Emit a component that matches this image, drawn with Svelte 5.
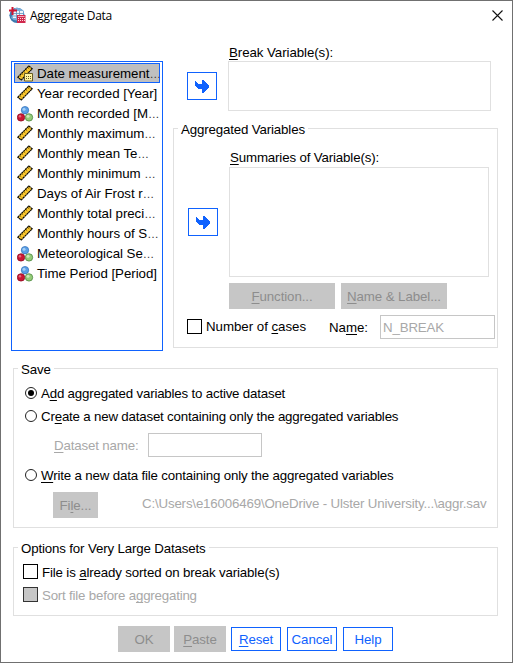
<script>
  const variables = [
    { name: 'Date measurement', dots: true, type: 'date' },
    { name: 'Year recorded [Year]', type: 'scale' },
    { name: 'Month recorded [M', dots: true, type: 'nominal' },
    { name: 'Monthly maximum', dots: true, type: 'scale' },
    { name: 'Monthly mean Te', dots: true, type: 'scale' },
    { name: 'Monthly minimum ', dots: true, type: 'scale' },
    { name: 'Days of Air Frost r', dots: true, type: 'scale' },
    { name: 'Monthly total preci', dots: true, type: 'scale' },
    { name: 'Monthly hours of S', dots: true, type: 'scale' },
    { name: 'Meteorological Se', dots: true, type: 'nominal' },
    { name: 'Time Period [Period]', type: 'nominal' }
  ];
  let selected = $state(0);
  let mode = $state('add');
</script>

{#snippet arrow()}
  <svg width="14" height="13" viewBox="0 0 14 13" shape-rendering="crispEdges">
    <path d="M0 1 H1 L3 4 H7 V0 H8 L14 6 V7 L8 13 H7 V9 H4 L1 7 L0 5Z" fill="#0f62fe" />
  </svg>
{/snippet}

{#snippet ruler()}
  <path d="M.8 12.2 L11.8 1 L15.2 3.8 L4.2 15Z" fill="#ffcb2e" stroke="#0c0a00" stroke-width="1.2" stroke-dasharray="2.200 .4" />
  <path d="M3 10.700l1.300 1.200M5 8.700l1.300 1.200M7 6.700l1.300 1.200M9 4.700l1.300 1.200M11 2.800l1.300 1.100" stroke="#4e3d0b" stroke-width=".7" />
{/snippet}

<div class="window">
  <header>
    <svg width="17" height="17" viewBox="0 0 17 17">
      <circle cx="8" cy="8.300" r="7.600" fill="#3a78ae" />
      <path d="M2 11 Q7 16 14 11 L15 4 Q11 0 6 1Z" fill="#79add8" />
      <path d="M5 4h9v7H4V6Z" fill="#edf4fa" />
      <path d="M4 6.500h10M4 9h10M7.500 4v7M10.500 4v7" stroke="#6593bd" stroke-width=".8" />
      <path d="M3.500 0v8M0 3.500h8" stroke="#d01531" stroke-width="2" />
      <path d="M8 8h8.500v8H8Z" fill="#d0284c" />
      <path d="M9 9.500h6.500" stroke="#f0a5b3" />
      <path d="M9 11.500h7M9 13.500h7" stroke="#fbd9df" stroke-dasharray="1 1" />
    </svg>
    <h1>Aggregate Data</h1>
    <svg class="close" width="11" height="11" viewBox="0 0 11 11"><path d="M.5 .5l10 10M10.500 .5l-10 10" stroke="#111" stroke-width="1.100" /></svg>
  </header>

  <div class="top">
    <div class="list" role="listbox">
      {#each variables as v, i}
        <div class="item" class:selected={selected === i} role="option" tabindex="-1" aria-selected={selected === i} onclick={() => (selected = i)} onkeydown={() => {}}>
          <svg width="17" height="17" viewBox="0 0 17 17">
            {#if v.type === 'nominal'}
              <circle cx="8" cy="5.200" r="3.700" fill="#5b9fe6" stroke="#3977bd" stroke-width=".8" />
              <circle cx="4" cy="12.400" r="3.700" fill="#cc1735" stroke="#8e0c22" stroke-width=".8" />
              <circle cx="12" cy="12.400" r="3.700" fill="#94cc78" stroke="#4d8841" stroke-width=".8" />
              <circle cx="7" cy="4.200" r="1.500" fill="#a5d0f7" />
              <circle cx="3" cy="11.200" r="1.200" fill="#e66d7c" />
              <circle cx="11" cy="11.200" r="1.500" fill="#cdeabd" />
            {:else}
              {@render ruler()}
              {#if v.type === 'date'}
                <path d="M7.500 8.500h8v7.500h-8Z" fill="#fff3a0" stroke="#685b22" />
                <path d="M9 11.500h6M9 13.500h6" stroke="#685b22" stroke-dasharray="1 1" />
              {/if}
            {/if}
          </svg>
          <span class="name">{v.name}{#if v.dots}<span class="dots">…</span>{/if}</span>
        </div>
      {/each}
    </div>

    <div class="right">
      <div class="break">
        <button class="move">{@render arrow()}</button>
        <div class="target">
          <label class="t1" for="b"><u>B</u>reak Variable(s):</label>
          <div id="b" class="box"></div>
        </div>
      </div>
      <section class="group aggregated">
        <h2>Aggregated Variables</h2>
        <div class="summary">
          <button class="move">{@render arrow()}</button>
          <div class="target">
            <label for="s"><u>S</u>ummaries of Variable(s):</label>
            <div id="s" class="box"></div>
            <div class="pair">
              <button class="off"><u>F</u>unction...</button>
              <button class="off"><u>N</u>ame &amp; Label...</button>
            </div>
          </div>
        </div>
        <div class="cases">
          <i class="check"></i><span class="n">Number of <u>c</u>ases</span>
          <span class="nm">Na<u>m</u>e:</span>
          <div class="field">N_BREAK</div>
        </div>
      </section>
    </div>
  </div>

  <section class="group save">
    <h2>Save</h2>
    <div class="line r1" role="radio" tabindex="0" aria-checked={mode === 'add'} onclick={() => (mode = 'add')} onkeydown={() => {}}>
      <i class="radio" class:on={mode === 'add'}></i><span>A<u>d</u>d aggregated variables to active dataset</span>
    </div>
    <div class="line r2" role="radio" tabindex="0" aria-checked={mode === 'new'} onclick={() => (mode = 'new')} onkeydown={() => {}}>
      <i class="radio" class:on={mode === 'new'}></i><span>Cr<u>e</u>ate a new dataset containing only the aggregated variables</span>
    </div>
    <div class="dataset"><span><u>D</u>ataset name:</span><div class="field"></div></div>
    <div class="line r3" role="radio" tabindex="0" aria-checked={mode === 'file'} onclick={() => (mode = 'file')} onkeydown={() => {}}>
      <i class="radio" class:on={mode === 'file'}></i><span><u>W</u>rite a new data file containing only the aggregated variables</span>
    </div>
    <div class="file">
      <button class="off">Fi<u>l</u>e...</button>
      <span>C:\Users\e16006469\OneDrive - Ulster University...\aggr.sav</span>
    </div>
  </section>

  <section class="group options">
    <h2>Options for Very Large Datasets</h2>
    <div class="line o1"><i class="check"></i><span>File is <u>a</u>lready sorted on break variable(s)</span></div>
    <div class="line o2"><i class="check dim"></i><span>Sort file before a<u>g</u>gregating</span></div>
  </section>

  <footer>
    <button class="off">OK</button>
    <button class="off"><u>P</u>aste</button>
    <button class="act first"><u>R</u>eset</button>
    <button class="act">Cancel</button>
    <button class="act">Help</button>
  </footer>
</div>

<style>
  .window, .window :global(*) { box-sizing: border-box; }
  .window {
    width: 513px; height: 663px; border: 1px solid #707070; background: #fff; color: #000;
    font: 13.3px/16px 'Liberation Sans', Arial, sans-serif; letter-spacing: -.15px; white-space: nowrap; overflow: hidden;
  }
  h1, h2 { margin: 0; font-weight: normal; }
  u { text-decoration: underline 1px; text-underline-offset: 2px; text-decoration-skip-ink: none; }
  button { font: inherit; padding: 2px 0 0; margin: 0; border-radius: 0; letter-spacing: -.1px; }
  svg { display: block; flex: none; }
  header { display: flex; height: 60px; padding: 6px 8px 0 8px; }
  h1 { font: 12px/17px 'Open Sans', 'Noto Sans', sans-serif; letter-spacing: -.28px; margin-left: 4px; flex: 1; }
  .close { margin: 3px 1px 0 0; }
  .top { display: flex; height: 290px; padding-left: 10px; }
  .list { width: 152px; height: 290px; border: 1px solid #0f62fe; padding: 1px 2px; flex: none; letter-spacing: -.04px; }
  .item { height: 20px; display: flex; align-items: center; padding-left: 2px; border: 1px solid transparent; }
  .name { margin-left: 3px; padding-top: 2px; white-space: pre; }
  .dots { font-size: 11.5px; color: #333; }
  .selected { background: #bfbfbf; border-color: #0f62fe; }
  .right { width: 325px; margin-left: 10px; display: flex; flex-direction: column; }
  .break { display: flex; margin: -17px 0 0 14px; height: 84px; }
  .move { width: 30px; height: 28px; padding: 0; background: #fff; border: 1px solid #0f62fe; display: flex; align-items: center; justify-content: center; flex: none; }
  .break .move { margin-top: 28px; }
  .target { display: flex; flex-direction: column; align-items: flex-start; margin-left: 11px; }
  .break .box { width: 263px; height: 50px; }
  .box { border: 1px solid #e0e0e0; }
  .target label { margin-left: 1px; padding-top: 1px; }
  .t1 { letter-spacing: -.07px; }
  .group { border: 1px solid #e0e0e0; }
  h2 { font-size: 13.3px; line-height: 16px; background: #fff; padding: 1px 3px 0; margin: -8px 0 -1px 4px; width: max-content; }
  .aggregated { height: 220px; }
  .summary { display: flex; margin: 13px 0 0 14px; }
  .summary .move { margin-top: 59px; }
  .summary .box { width: 260px; height: 110px; margin-top: 1px; }
  .summary { margin-top: 12px; }
  .pair { display: flex; gap: 6px; margin-top: 6px; }
  .pair .off { width: 106px; }
  .off { height: 26px; border: 0; background: #c6c6c6; color: #8d8d8d; }
  .cases { display: flex; align-items: center; margin: 6px 0 0 13px; height: 24px; letter-spacing: -.03px; }
  .check { width: 15px; height: 15px; border: 1px solid #000; flex: none; }
  .cases .check { margin-bottom: 2px; }
  .check.dim { background: #c6c6c6; border-color: #333; }
  .n { margin-left: 4px; width: 123px; }
  .nm { width: 51px; padding-top: 2px; }
  .field { width: 115px; height: 24px; border: 1px solid #c6c6c6; color: #a8a8a8; padding: 4px 1px 0 2px; letter-spacing: -.15px; }
  .save { width: 485px; height: 160px; margin: 17px 0 0 12px; }
  .line { display: flex; align-items: center; height: 16px; }
  .line span { padding-top: 2px; }
  .radio { width: 12px; height: 12px; border: 1px solid #222; border-radius: 50%; flex: none; display: grid; place-items: center; }
  .radio.on::after { content: ''; width: 6px; height: 6px; border-radius: 50%; background: #000; }
  .save .line { padding-left: 11px; letter-spacing: -.19px; }
  .save .r3 { letter-spacing: -.165px; }
  .save .line span { margin-left: 4px; }
  .r1 { margin-top: 8px; }
  .r2 { margin-top: 7px; }
  .r3 { margin-top: 10px; }
  .dataset { display: flex; align-items: center; margin: 9px 0 0 40px; color: #a8a8a8; }
  .dataset span { width: 94px; padding-top: 2px; }
  .dataset .field { width: 114px; }
  .file { display: flex; margin: 9px 0 0 39px; color: #a8a8a8; }
  .file .off { width: 45px; }
  .file span { margin: 4px 0 0 44px; letter-spacing: -.17px; }
  .options { width: 485px; height: 69px; margin: 19px 0 0 12px; }
  .options .line { padding-left: 9px; }
  .options .check { margin-bottom: 1px; }
  .options .line span { margin-left: 4px; }
  .o1 { margin-top: 8px; }
  .o2 { margin-top: 7px; color: #a8a8a8; letter-spacing: -.2px; }
  footer { display: flex; align-items: center; margin: 10px 0 0 117px; }
  footer .off { width: 52px; margin-right: 4px; }
  .act { width: 50px; height: 24px; border: 1px solid #0f62fe; background: #fff; color: #0f62fe; margin-right: 6px; }
  .first { margin-left: 1px; }
</style>
